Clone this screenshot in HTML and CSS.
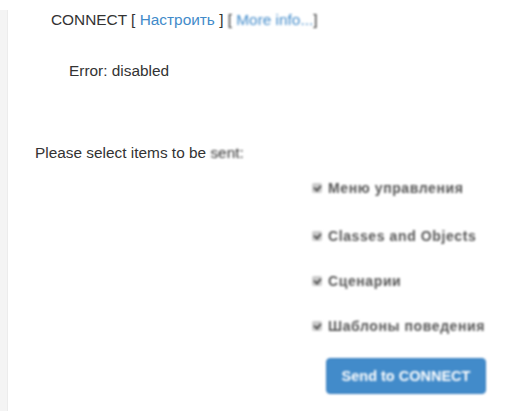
FILE: index.html
```html
<!DOCTYPE html>
<html>
<head>
<meta charset="utf-8">
<link rel="stylesheet" href="styles.css">
</head>
<body>
<div class="page">
  <aside class="side"></aside>
  <main class="content">
    <div class="title">CONNECT [ <a href="#" class="link">Настроить</a> ] <span class="blur1">[ <a href="#" class="link">More info...</a>]</span></div>
    <div class="error">Error: disabled</div>
    <div class="prompt">Please select items to be <span class="blur1">sent:</span></div>
    <form class="items">
      <label class="item"><span class="cb"></span>Меню управления</label>
      <label class="item"><span class="cb"></span>Classes and Objects</label>
      <label class="item"><span class="cb"></span>Сценарии</label>
      <label class="item"><span class="cb"></span>Шаблоны поведения</label>
      <button type="button" class="btn">Send to CONNECT</button>
    </form>
  </main>
</div>
</body>
</html>
```
FILE: styles.css
```css
html, body {
  margin: 0;
  padding: 0;
  background: #fff;
}
body {
  font-family: "Liberation Sans", Arial, sans-serif;
  font-size: 15.4px;
  color: #333;
}
.page {
  display: flex;
  min-height: 411px;
}
.side {
  width: 7px;
  margin-top: 10px;
  background: #f4f4f4;
  border-right: 1px solid #ececec;
  flex-shrink: 0;
}
.content {
  flex: 1;
  padding-left: 27px;
}
.link {
  color: #428bca;
  text-decoration: none;
}
.blur1 {
  filter: blur(0.8px);
  display: inline-block;
}
.title {
  margin-top: 10px;
  padding-left: 16px;
  line-height: 20px;
}
.error {
  margin-top: 31px;
  padding-left: 34px;
  line-height: 20px;
}
.prompt {
  margin-top: 62px;
  line-height: 20px;
}
.items {
  display: flex;
  flex-direction: column;
  align-items: flex-start;
  margin-left: 277px;
  margin-top: 17px;
  filter: blur(1.2px);
}
.item {
  display: flex;
  align-items: center;
  font-weight: bold;
  font-size: 14px;
  letter-spacing: 0.6px;
  color: #555;
  height: 16px;
  margin-bottom: 29px;
}
.item:first-child {
  margin-bottom: 32px;
}
.item:last-of-type {
  margin-bottom: 24px;
}
.cb {
  width: 10px;
  height: 10px;
  background: #ccc;
  border-radius: 2px;
  margin-right: 6px;
  position: relative;
}
.cb::after {
  content: "";
  position: absolute;
  left: 3px;
  top: 1px;
  width: 3px;
  height: 5px;
  border: solid #555;
  border-width: 0 2px 2px 0;
  transform: rotate(40deg);
}
.btn {
  margin-left: 14px;
  width: 160px;
  height: 36px;
  background: #428bca;
  border: 1px solid #3a7fbf;
  border-radius: 4px;
  color: #fff;
  font-family: "Liberation Sans", Arial, sans-serif;
  font-size: 14.5px;
  font-weight: bold;
  padding: 0;
}
```
